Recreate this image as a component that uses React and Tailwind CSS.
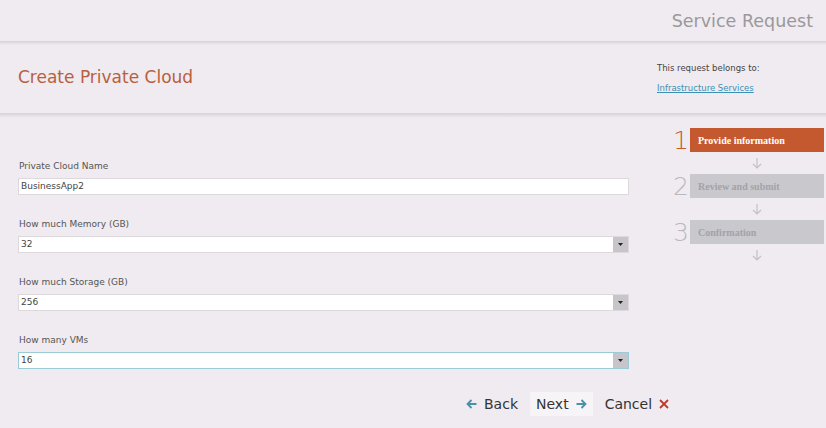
import React from "react";

function Field({ label, value, select, focused }) {
  return (
    <div className="flex flex-col">
      <div className="h-[12px] mb-[6px] text-[9px] leading-[12px] text-[#555] pl-[1px]">{label}</div>
      <div
        className={`h-[17px] w-[611px] flex items-stretch bg-white border ${
          focused ? "border-[#9ccbd8]" : "border-[#dcd8dc]"
        }`}
      >
        <div className="flex-1 flex items-center pl-[2px] text-[9px] text-[#444]">{value}</div>
        {select && (
          <div className="w-[15px] bg-[#c8c5ca] flex items-center justify-center">
            <svg width="5" height="3" viewBox="0 0 5 3">
              <path d="M0 0H5L2.5 3Z" fill="#222" />
            </svg>
          </div>
        )}
      </div>
    </div>
  );
}

function Arrow() {
  return (
    <div className="h-[22px] flex items-center justify-center pl-[17px]">
      <svg width="10" height="11" viewBox="0 0 10 11" fill="none" stroke="#c2c0c6" strokeWidth="1.2">
        <path d="M5 0V10M1 6L5 10L9 6" />
      </svg>
    </div>
  );
}

function Step({ n, label, active }) {
  return (
    <div className="flex items-center h-[24px]">
      <div
        className={`w-[17px] text-[25px] leading-none font-light ${
          active ? "text-[#c4592f]" : "text-[#b9b8bd]"
        }`}
      >
        {n}
      </div>
      <div
        className={`w-[134px] h-[24px] flex items-center pl-[8px] text-[10px] font-bold font-['Liberation_Serif',serif] ${
          active ? "bg-[#c4592f] text-white" : "bg-[#c9c8cd] text-[#a3a2a8]"
        }`}
      >
        {label}
      </div>
    </div>
  );
}

export default function App() {
  return (
    <div className="w-[826px] h-[428px] overflow-hidden bg-[#efebf0] font-['DejaVu_Sans',sans-serif] flex flex-col">
      <div className="h-[41px] flex items-center justify-end pr-[13px] pt-[1px] text-[17.5px] text-[#9b989c]">
        Service Request
      </div>
      <div className="h-[4px] bg-gradient-to-b from-[#d6d2d7] to-[#efebf0]" />
      <div className="h-[68px] flex justify-between">
        <div className="pl-[18px] pt-[20px] text-[17px] text-[#b8603e]">Create Private Cloud</div>
        <div className="w-[169px] pt-[17px] text-[8.5px] leading-[12px]">
          <div className="text-[#444]">This request belongs to:</div>
          <div className="mt-[8px] text-[#3b90b4] underline">Infrastructure Services</div>
        </div>
      </div>
      <div className="h-[5px] bg-gradient-to-b from-[#d6d2d7] to-[#efebf0]" />
      <div className="flex">
        <div className="w-[673px] pl-[18px] pt-[42px] flex flex-col gap-[23px]">
          <Field label="Private Cloud Name" value="BusinessApp2" />
          <Field label="How much Memory (GB)" value="32" select />
          <Field label="How much Storage (GB)" value="256" select />
          <Field label="How many VMs" value="16" select focused />
        </div>
        <div className="pt-[10px] flex flex-col">
          <Step n="1" label="Provide information" active />
          <Arrow />
          <Step n="2" label="Review and submit" />
          <Arrow />
          <Step n="3" label="Confirmation" />
          <Arrow />
        </div>
      </div>
      <div className="mt-[23px] pl-[466px] flex items-center gap-[12px] text-[14px] text-[#333]">
        <div className="flex items-center gap-[7px]">
          <svg width="11" height="10" viewBox="0 0 11 10" fill="none" stroke="#4a90a8" strokeWidth="1.8">
            <path d="M10.5 5H1.5M5.5 1L1.5 5L5.5 9" />
          </svg>
          <span>Back</span>
        </div>
        <div className="flex items-center gap-[7px] h-[24px] px-[6px] bg-[#f6f4f7]">
          <span>Next</span>
          <svg width="11" height="10" viewBox="0 0 11 10" fill="none" stroke="#4a90a8" strokeWidth="1.8">
            <path d="M0.5 5H9.5M5.5 1L9.5 5L5.5 9" />
          </svg>
        </div>
        <div className="flex items-center gap-[7px]">
          <span>Cancel</span>
          <svg width="10" height="10" viewBox="0 0 10 10" fill="none" stroke="#c0392b" strokeWidth="1.8">
            <path d="M1 1L9 9M9 1L1 9" />
          </svg>
        </div>
      </div>
    </div>
  );
}
